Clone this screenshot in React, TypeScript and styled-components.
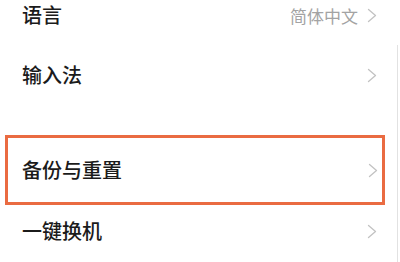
import React from 'react';
import styled, { createGlobalStyle } from 'styled-components';

const GlobalStyle = createGlobalStyle`
  html, body {
    margin: 0;
    padding: 0;
    background: #ffffff;
    overflow: hidden;
  }
  body {
    font-family: "Noto Sans CJK SC", "Noto Sans", sans-serif;
  }
`;

const Page = styled.div`
  display: flex;
  width: 400px;
  height: 262px;
  overflow: hidden;
  background: #ffffff;
`;

const List = styled.div`
  width: 397px;
  margin-top: -15px;
  display: flex;
  flex-direction: column;
`;

const Rail = styled.div`
  flex: 1;
  margin-top: 45px;
  border-left: 1px solid #e2e2e2;
`;

const Row = styled.div<{ $height: number; $highlight?: boolean }>`
  display: flex;
  align-items: center;
  justify-content: space-between;
  box-sizing: border-box;
  height: ${(p) => p.$height}px;
  flex-shrink: 0;
  padding: ${(p) => (p.$highlight ? '0 4px 0 14px' : '0 20px 0 22px')};
  margin: ${(p) => (p.$highlight ? '0 12px 0 5px' : '0')};
  border: ${(p) => (p.$highlight ? '3px solid #ea6b41' : 'none')};
`;

const Label = styled.span`
  font-size: 20px;
  font-weight: 500;
  line-height: 1;
  color: #1b1b1b;
`;

const Right = styled.div`
  display: flex;
  align-items: center;
  gap: 9px;
`;

const Value = styled.span`
  font-size: 17px;
  line-height: 1;
  color: #a3a3a3;
`;

const Spacer = styled.div`
  height: 30px;
  flex-shrink: 0;
`;

function Chevron() {
  return (
    <svg width="10" height="15" viewBox="0 0 10 15" fill="none">
      <path d="M1.5 1.5 L8.5 7.5 L1.5 13.5" stroke="#c2c2c2" strokeWidth="1.3" strokeLinecap="round" strokeLinejoin="round" />
    </svg>
  );
}

export default function App() {
  return (
    <Page>
      <GlobalStyle />
      <List>
        <Row $height={60}>
          <Label>语言</Label>
          <Right>
            <Value>简体中文</Value>
            <Chevron />
          </Right>
        </Row>
        <Row $height={60}>
          <Label>输入法</Label>
          <Chevron />
        </Row>
        <Spacer />
        <Row $height={70} $highlight>
          <Label>备份与重置</Label>
          <Chevron />
        </Row>
        <Row $height={52}>
          <Label>一键换机</Label>
          <Chevron />
        </Row>
      </List>
      <Rail />
    </Page>
  );
}
